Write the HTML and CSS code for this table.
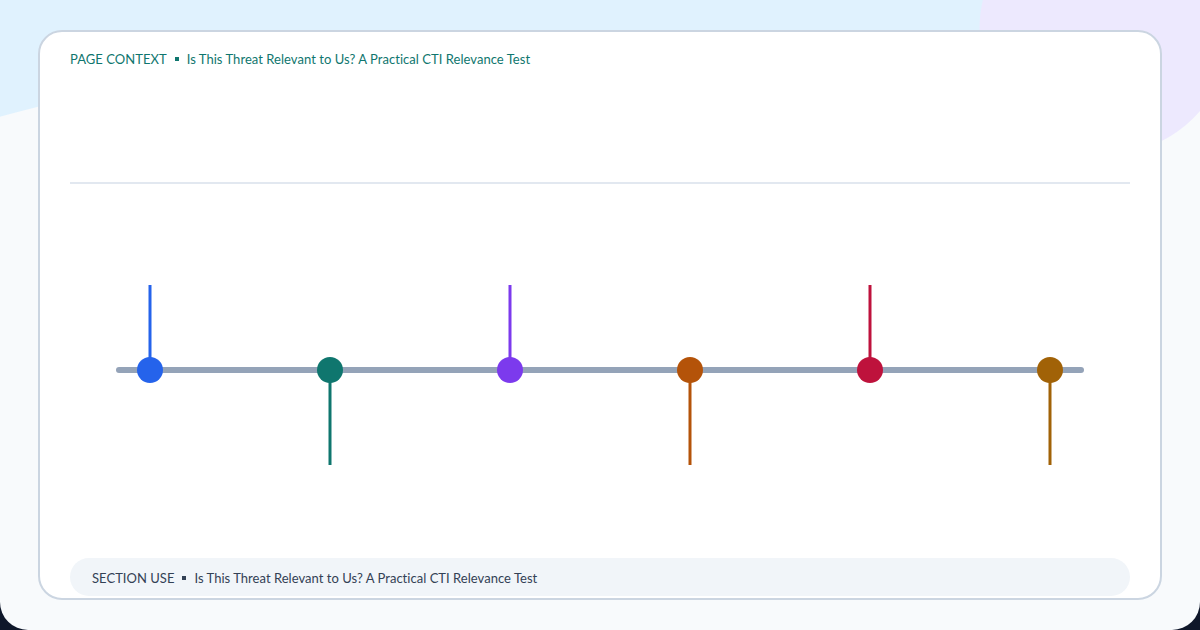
FILE: index.html
```html
<!DOCTYPE html>
<html lang="en">
<head>
<meta charset="utf-8">
<title>Is This Threat Relevant to Us? A Practical CTI Relevance Test</title>
<link rel="stylesheet" href="styles.css">
</head>
<body>
<div class="page">
  <main class="card">
    <header class="context">
      <span class="label">PAGE CONTEXT</span>
      <span class="sep"></span>
      <span class="title">Is This Threat Relevant to Us? A Practical CTI Relevance Test</span>
    </header>
    <section class="timeline">
      <svg class="timeline-svg" width="1060" height="374" viewBox="0 0 1060 374" aria-hidden="true">
        <line x1="49" y1="186" x2="1011" y2="186" stroke="#94a3b8" stroke-width="6" stroke-linecap="round"/>
        <line x1="80" y1="101" x2="80" y2="186" stroke="#2563eb" stroke-width="3"/>
        <circle cx="80" cy="186" r="13" fill="#2563eb"/>
        <line x1="260" y1="186" x2="260" y2="281" stroke="#0f766e" stroke-width="3"/>
        <circle cx="260" cy="186" r="13" fill="#0f766e"/>
        <line x1="440" y1="101" x2="440" y2="186" stroke="#7c3aed" stroke-width="3"/>
        <circle cx="440" cy="186" r="13" fill="#7c3aed"/>
        <line x1="620" y1="186" x2="620" y2="281" stroke="#b45309" stroke-width="3"/>
        <circle cx="620" cy="186" r="13" fill="#b45309"/>
        <line x1="800" y1="101" x2="800" y2="186" stroke="#be123c" stroke-width="3"/>
        <circle cx="800" cy="186" r="13" fill="#be123c"/>
        <line x1="980" y1="186" x2="980" y2="281" stroke="#a16207" stroke-width="3"/>
        <circle cx="980" cy="186" r="13" fill="#a16207"/>
      </svg>
    </section>
    <footer class="usage">
      <span class="label">SECTION USE</span>
      <span class="sep"></span>
      <span class="title">Is This Threat Relevant to Us? A Practical CTI Relevance Test</span>
    </footer>
  </main>
</div>
</body>
</html>
```
FILE: styles.css
```css
html {
  background: #0f172a;
}
body {
  margin: 0;
  font-family: Lato, "Noto Sans", "DejaVu Sans", sans-serif;
}
.page {
  box-sizing: border-box;
  width: 1200px;
  height: 630px;
  padding: 30px 38px;
  border-radius: 0 0 28px 28px;
  background:
    radial-gradient(circle at 1105px 29px, #ede9fe 125px, rgba(237, 233, 254, 0) 126px),
    radial-gradient(circle at 650px 2524px, #f8fafc 2493px, rgba(248, 250, 252, 0) 2494px),
    #e0f2fe;
}
.card {
  box-sizing: border-box;
  height: 570px;
  border: 2px solid #cbd5e1;
  border-radius: 24px;
  background: #ffffff;
  padding: 0 30px 2px;
  display: grid;
  grid-template-rows: 152px 374px 38px;
}
.context {
  box-sizing: border-box;
  padding-top: 18px;
  border-bottom: 2px solid #e2e8f0;
  color: #0f766e;
  font-size: 13px;
  line-height: 18px;
  letter-spacing: 0.04px;
  display: flex;
  align-items: flex-start;
}
.sep {
  display: inline-block;
  width: 4px;
  height: 4px;
  background: currentColor;
  margin: 0 8px;
  align-self: center;
}
.context .sep {
  align-self: auto;
  margin-top: 7px;
}
.timeline {
  display: block;
}
.timeline-svg {
  display: block;
}
.usage {
  display: flex;
  align-items: center;
  padding: 2px 22px 0;
  border-radius: 19px;
  background: #f1f5f9;
  color: #334155;
  font-size: 13px;
  letter-spacing: 0.03px;
}
```
